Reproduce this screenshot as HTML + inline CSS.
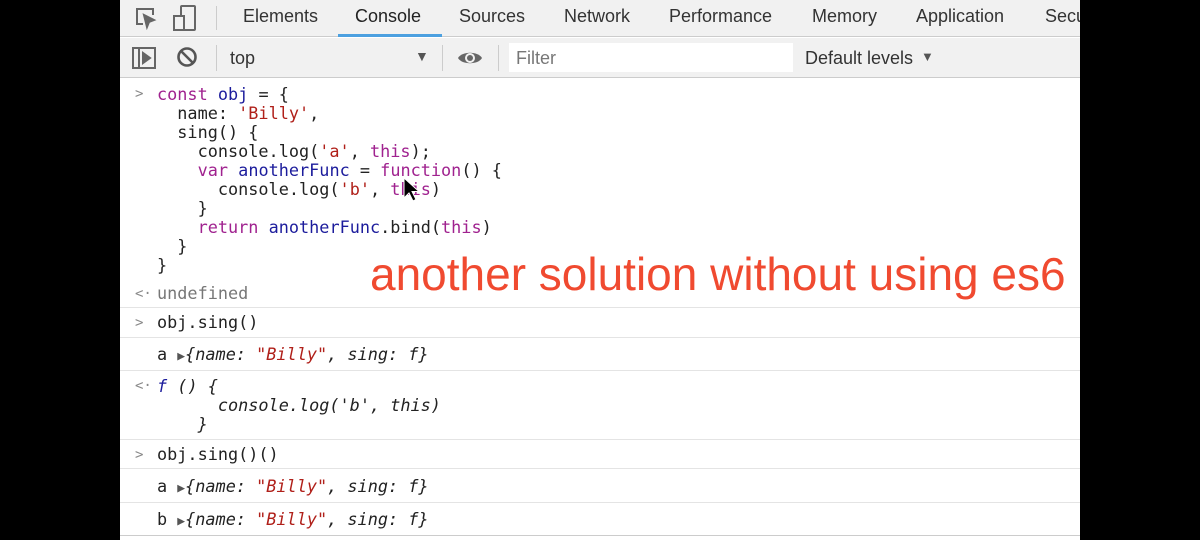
<!DOCTYPE html>
<html><head><meta charset="utf-8"><style>
*{margin:0;padding:0;box-sizing:border-box}
body{width:1200px;height:540px;background:#000;position:relative;overflow:hidden;font-family:"Liberation Sans",sans-serif}
#p{position:absolute;left:120px;top:0;width:960px;height:540px;background:#fff;overflow:hidden}
.bar1{position:absolute;left:0;top:0;width:960px;height:37px;background:#f1f1f1;border-bottom:1px solid #ccc}
.bar2{position:absolute;left:0;top:38px;width:960px;height:40px;background:#f1f1f1;border-bottom:1px solid #ccc}
.t{position:absolute;font-size:18px;color:#333;top:6px}
.m{font-family:"DejaVu Sans Mono","Liberation Mono",monospace;font-size:16.85px;position:absolute;white-space:pre;color:#222;line-height:19px}
.k{color:#a0228f}.s{color:#b0201a}.v{color:#1c1c9c}.g{color:#777}
.sep{position:absolute;left:0;width:960px;height:1px;background:#e4e4e4}
.pr{position:absolute;left:15px;color:#888;font-family:"DejaVu Sans Mono",monospace;font-size:14px}
.tr{font-size:13px;color:#555;font-style:normal}
i{font-style:italic}
</style></head><body><div id="p">
<div class="bar1">
<svg style="position:absolute;left:14px;top:6px" width="24" height="24" viewBox="0 0 24 24" fill="none" stroke="#666" stroke-width="2"><path d="M9 18H3V3h16v6"/><path d="M10 9l3 12 2-5 5-2z" fill="#666"/></svg>
<svg style="position:absolute;left:52px;top:4px" width="26" height="28" viewBox="0 0 26 28" fill="none" stroke="#666" stroke-width="2"><rect x="9" y="2" width="14" height="24" rx="1"/><rect x="2" y="12" width="10" height="14" fill="#f1f1f1"/></svg>
<div style="position:absolute;left:96px;top:6px;width:1px;height:24px;background:#ccc"></div>
<span class="t" style="left:123px">Elements</span>
<span class="t" style="left:235px;color:#222">Console</span>
<div style="position:absolute;left:218px;top:34px;width:104px;height:3px;background:#4ca0e0"></div>
<span class="t" style="left:339px">Sources</span>
<span class="t" style="left:444px">Network</span>
<span class="t" style="left:549px">Performance</span>
<span class="t" style="left:692px">Memory</span>
<span class="t" style="left:796px">Application</span>
<span class="t" style="left:925px">Secu</span>
</div>
<div class="bar2">
<svg style="position:absolute;left:12px;top:9px" width="24" height="22" viewBox="0 0 24 22" fill="none" stroke="#666" stroke-width="2"><rect x="1" y="1" width="22" height="20"/><path d="M7 1v20"/><path d="M11 6l7 5-7 5z" fill="#666"/></svg>
<svg style="position:absolute;left:56px;top:8px" width="22" height="22" viewBox="0 0 22 22" fill="none" stroke="#555" stroke-width="2.6"><circle cx="11" cy="11" r="8.5"/><path d="M5 5l12 12"/></svg>
<div style="position:absolute;left:96px;top:7px;width:1px;height:26px;background:#ccc"></div>
<span class="t" style="left:110px;top:10px">top</span>
<span style="position:absolute;left:295px;top:10px;font-size:14px;color:#555">▼</span>
<div style="position:absolute;left:322px;top:7px;width:1px;height:26px;background:#ccc"></div>
<svg style="position:absolute;left:337px;top:10px" width="26" height="20" viewBox="0 0 26 20"><path d="M1 10C5 3 21 3 25 10C21 17 5 17 1 10z" fill="#666"/><circle cx="13" cy="10" r="5" fill="#f1f1f1"/><circle cx="13" cy="10" r="3" fill="#666"/></svg>
<div style="position:absolute;left:378px;top:7px;width:1px;height:26px;background:#ccc"></div>
<div style="position:absolute;left:389px;top:5px;width:284px;height:29px;background:#fff"></div>
<span class="t" style="left:396px;top:10px;color:#777">Filter</span>
<span class="t" style="left:685px;top:10px">Default levels</span>
<span style="position:absolute;left:801px;top:11px;font-size:13px;color:#555">▼</span>
</div>

<span class="pr" style="top:86px">&gt;</span>
<div class="m" style="left:37px;top:85px"><span class="k">const</span> <span class="v">obj</span> = {
  name: <span class="s">'Billy'</span>,
  sing() {
    console.log(<span class="s">'a'</span>, <span class="k">this</span>);
    <span class="k">var</span> <span class="v">anotherFunc</span> = <span class="k">function</span>() {
      console.log(<span class="s">'b'</span>, <span class="k">this</span>)
    }
    <span class="k">return</span> <span class="v">anotherFunc</span>.bind(<span class="k">this</span>)
  }
}</div>
<svg style="position:absolute;left:283px;top:177px" width="16" height="26" viewBox="0 0 16 26"><path d="M1 1v20l5-5 4 8 3-1.5-4-8h7z" fill="#000" stroke="#fff" stroke-width="1"/></svg>
<div style="position:absolute;left:250px;top:247px;font-size:46px;color:#f04a30;white-space:nowrap">another solution without using es6</div>
<span class="pr" style="top:286px">&lt;·</span>
<div class="m g" style="left:37px;top:284px">undefined</div>
<div class="sep" style="top:307px"></div>
<span class="pr" style="top:315px">&gt;</span>
<div class="m" style="left:37px;top:313px">obj.sing()</div>
<div class="sep" style="top:337px"></div>
<div class="m" style="left:37px;top:345px">a <span class="tr">▶</span><i>{name: <span class="s">"Billy"</span>, sing: f}</i></div>
<div class="sep" style="top:370px"></div>
<span class="pr" style="top:378px">&lt;·</span>
<div class="m" style="left:37px;top:377px"><i><span class="v">f</span> () {
      console.log('b', this)
    }</i></div>
<div class="sep" style="top:439px"></div>
<span class="pr" style="top:447px">&gt;</span>
<div class="m" style="left:37px;top:445px">obj.sing()()</div>
<div class="sep" style="top:468px"></div>
<div class="m" style="left:37px;top:477px">a <span class="tr">▶</span><i>{name: <span class="s">"Billy"</span>, sing: f}</i></div>
<div class="sep" style="top:502px"></div>
<div class="m" style="left:37px;top:510px">b <span class="tr">▶</span><i>{name: <span class="s">"Billy"</span>, sing: f}</i></div>
<div class="sep" style="top:535px;background:#ccc"></div>
</div></body></html>
